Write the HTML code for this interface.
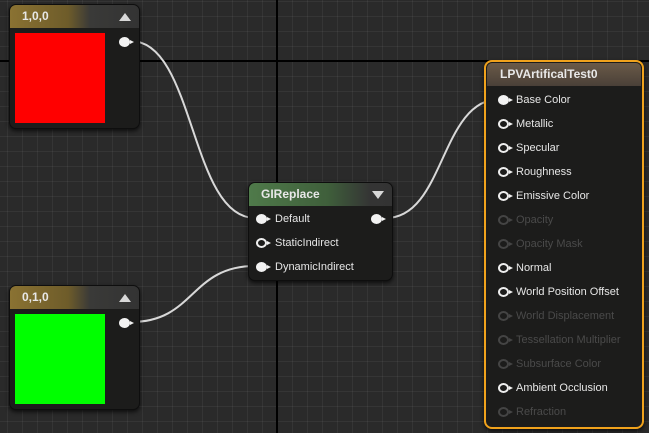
<!DOCTYPE html><html><head><style>
*{margin:0;padding:0;box-sizing:border-box}
body{width:649px;height:433px;overflow:hidden;position:relative;font-family:"Liberation Sans",sans-serif;
background-color:#2a2a2a;
background-image:linear-gradient(#000,#000),linear-gradient(#000,#000),linear-gradient(90deg,rgba(255,255,255,0.05) 1px,transparent 1px),linear-gradient(rgba(255,255,255,0.05) 1px,transparent 1px);
background-size:2px 433px,649px 2px,15px 15px,15px 15px;
background-position:276px 0,0 60px,7px 0,0 1px;background-repeat:no-repeat,no-repeat,repeat,repeat}
.node{position:absolute;background:#1c1c1b;border-radius:7px;box-shadow:0 2px 4px rgba(0,0,0,.7);border:1px solid #0e0e0e}
.hdr{height:23px;border-radius:6px 6px 0 0;color:#e8e8e8;font-weight:bold;font-size:12px;line-height:23px;padding-left:12px;position:relative}
.tri{position:absolute;right:8px;top:8px;width:0;height:0;border-left:6px solid transparent;border-right:6px solid transparent}
.up{border-bottom:8px solid #d8d8d8}.dn{border-top:8px solid #d8d8d8;top:8px}
.row{position:absolute;font-size:11px;color:#e6e6e6;height:16px;line-height:16px;white-space:nowrap}
.pin{position:absolute;width:11px;height:10px;border-radius:50%;background:#f2f2f2}
.pin:after{content:"";position:absolute;right:-4px;top:3px;border-left:4px solid #f2f2f2;border-top:2px solid transparent;border-bottom:2px solid transparent}
.hol{background:transparent;border:2px solid #eee}
.hol:after{right:-6px;top:1px}
.dim{color:#4a4a4a}
.dim .pin{border-color:#444}.dim .pin:after{border-left-color:#444}
svg{position:absolute;left:0;top:0}
</style></head><body>
<svg width="649" height="433"><g fill="none" stroke="#d8d8d8" stroke-width="2">
<path d="M131 41 C195 41,190 218,255 218"/>
<path d="M131 322 C195 322,190 266,255 266"/>
<path d="M386 218 C445 218,440 99,500 99"/>
</g></svg>

<div class="node" style="left:9px;top:4px;width:131px;height:125px">
<div class="hdr" style="background:linear-gradient(90deg,#8a7232 0%,#6e5c2a 45%,#3a3a38 62%,#333 100%)">1,0,0<div class="tri up"></div></div>
<div style="position:absolute;left:5px;top:28px;width:90px;height:90px;background:#f00"></div>
<div class="pin" style="left:109px;top:32px"></div>
</div>

<div class="node" style="left:9px;top:285px;width:131px;height:125px">
<div class="hdr" style="background:linear-gradient(90deg,#8a7232 0%,#6e5c2a 45%,#3a3a38 62%,#333 100%)">0,1,0<div class="tri up"></div></div>
<div style="position:absolute;left:5px;top:28px;width:90px;height:90px;background:#0f0"></div>
<div class="pin" style="left:109px;top:32px"></div>
</div>

<div class="node" style="left:248px;top:182px;width:145px;height:99px">
<div class="hdr" style="background:linear-gradient(90deg,#4f7a4a 0%,#3f5f3b 55%,#343434 85%,#333 100%)">GIReplace<div class="tri dn"></div></div>
<div class="row" style="left:7px;top:28px"><div class="pin" style="left:0;top:3px"></div><span style="margin-left:19px">Default</span></div>
<div class="row" style="left:7px;top:52px"><div class="pin hol" style="left:0;top:3px"></div><span style="margin-left:19px">StaticIndirect</span></div>
<div class="row" style="left:7px;top:76px"><div class="pin" style="left:0;top:3px"></div><span style="margin-left:19px">DynamicIndirect</span></div>
<div class="pin" style="left:122px;top:31px"></div>
</div>

<div class="node" style="left:484px;top:60px;width:160px;height:369px;border:2px solid #f0a21c;border-radius:8px;background:#1c1c1b">
<div class="hdr" style="margin:1px;border-radius:5px 5px 0 0;background:linear-gradient(180deg,#6a5a48,#4a4038);padding-left:13px">LPVArtificalTest0</div>
<div style="position:absolute;left:12px;top:30px">
<div class="row" style="top:0"><div class="pin" style="top:3px"></div><span style="margin-left:18px">Base Color</span></div>
<div class="row" style="top:24px"><div class="pin hol" style="top:3px"></div><span style="margin-left:18px">Metallic</span></div>
<div class="row" style="top:48px"><div class="pin hol" style="top:3px"></div><span style="margin-left:18px">Specular</span></div>
<div class="row" style="top:72px"><div class="pin hol" style="top:3px"></div><span style="margin-left:18px">Roughness</span></div>
<div class="row" style="top:96px"><div class="pin hol" style="top:3px"></div><span style="margin-left:18px">Emissive Color</span></div>
<div class="row dim" style="top:120px"><div class="pin hol" style="top:3px"></div><span style="margin-left:18px">Opacity</span></div>
<div class="row dim" style="top:144px"><div class="pin hol" style="top:3px"></div><span style="margin-left:18px">Opacity Mask</span></div>
<div class="row" style="top:168px"><div class="pin hol" style="top:3px"></div><span style="margin-left:18px">Normal</span></div>
<div class="row" style="top:192px"><div class="pin hol" style="top:3px"></div><span style="margin-left:18px">World Position Offset</span></div>
<div class="row dim" style="top:216px"><div class="pin hol" style="top:3px"></div><span style="margin-left:18px">World Displacement</span></div>
<div class="row dim" style="top:240px"><div class="pin hol" style="top:3px"></div><span style="margin-left:18px">Tessellation Multiplier</span></div>
<div class="row dim" style="top:264px"><div class="pin hol" style="top:3px"></div><span style="margin-left:18px">Subsurface Color</span></div>
<div class="row" style="top:288px"><div class="pin hol" style="top:3px"></div><span style="margin-left:18px">Ambient Occlusion</span></div>
<div class="row dim" style="top:312px"><div class="pin hol" style="top:3px"></div><span style="margin-left:18px">Refraction</span></div>
</div>
</div>
</body></html>
